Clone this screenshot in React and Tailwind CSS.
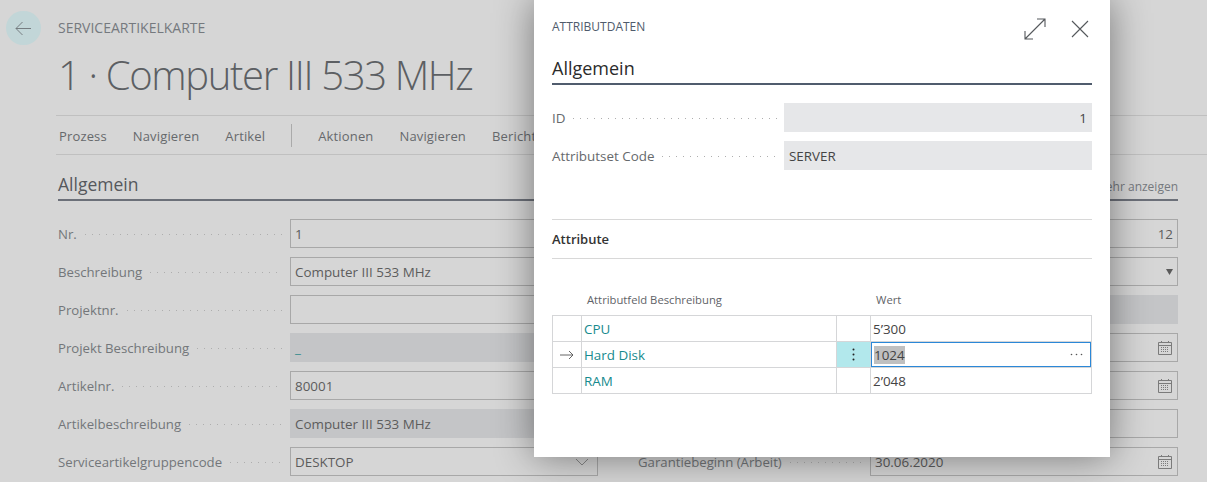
import React from 'react';

const leader = 'flex-1 h-px mx-2 mt-[2px] bg-[linear-gradient(to_right,#aeaeae_1px,transparent_1px)] bg-[length:7px_1px] bg-repeat-x';

const CalendarIcon = () => (
  <svg width="16" height="16" viewBox="0 0 16 16" fill="none" stroke="#7b7b7b" strokeWidth="1">
    <path d="M1.5 2.5h13v12h-13z" />
    <path d="M1.5 5.5h13" />
    <path d="M4.5 1v2M11.5 1v2" />
    <path d="M4 7.5h8M4 9.5h8M4 11.5h8" strokeDasharray="1 1" />
  </svg>
);

const leftFields = [
  { label: 'Nr.', value: '1' },
  { label: 'Beschreibung', value: 'Computer III 533 MHz' },
  { label: 'Projektnr.', value: '' },
  { label: 'Projekt Beschreibung', value: '_', readOnly: true, link: true },
  { label: 'Artikelnr.', value: '80001' },
  { label: 'Artikelbeschreibung', value: 'Computer III 533 MHz', readOnly: true },
  { label: 'Serviceartikelgruppencode', value: 'DESKTOP', chevron: true },
];

const rightFields = [
  { value: '12', right: true },
  { caret: true },
  { readOnly: true },
  { calendar: true },
  { calendar: true },
  {},
  { label: 'Garantiebeginn (Arbeit)', value: '30.06.2020', calendar: true },
];

const Field = ({ field }) => (
  <div className="flex items-center h-[29px]">
    <span className="pt-[2px] text-[13.2px] text-[#73767a] whitespace-nowrap">{field.label}</span>
    <div className={field.label ? leader : 'flex-1'} />
    <div
      className={`w-[308px] h-[29px] flex items-center shrink-0 text-[#5c5c5c] ${
        field.readOnly ? 'px-[5px] bg-[#c4c5c7]' : 'px-[4px] border border-[#a8a8a8]'
      }`}
    >
      <span className={`flex-1 pt-[2px] whitespace-nowrap ${field.right ? 'text-right' : ''} ${field.link ? 'text-[#2f8a8c]' : ''}`}>
        {field.value}
      </span>
      {field.chevron && (
        <svg width="14" height="8" viewBox="0 0 14 8" fill="none" stroke="#8a8a8a" className="mr-1">
          <path d="M1 1l6 6 6-6" />
        </svg>
      )}
      {field.caret && (
        <svg width="7" height="7" viewBox="0 0 7 7" fill="#5a5a5a">
          <path d="M0 1h7L3.5 7z" />
        </svg>
      )}
      {field.calendar && <CalendarIcon />}
    </div>
  </div>
);

const rows = [
  { name: 'CPU', value: '5’300' },
  { name: 'Hard Disk', value: '1024', active: true },
  { name: 'RAM', value: '2’048' },
];

const navLeft = ['Prozess', 'Navigieren', 'Artikel'];
const navRight = ['Aktionen', 'Navigieren', 'Berichte'];

const App = () => {
  return (
    <div className="relative w-[1207px] h-[482px] overflow-hidden bg-[#d6d6d6] font-['Open_Sans',sans-serif] text-[13.4px]">
      {/* Background card */}
      <div className="flex">
        <div className="w-[58px] shrink-0 pl-[6px] pt-[11px]">
          <div className="w-[35px] h-[34px] rounded-full bg-[#c2d6d8] flex items-center justify-center">
            <svg width="17" height="15" viewBox="0 0 17 15" fill="none" stroke="#6d7377" strokeWidth="0.9">
              <path d="M16 7.5H1M7.5 1L1 7.5 7.5 14" />
            </svg>
          </div>
        </div>
        <div className="flex-1 min-w-0">
          <div className="pt-[19px] h-[46px] text-[14px] font-medium text-[#75797e] leading-[18px]">SERVICEARTIKELKARTE</div>
          <h1 className="h-[69px] text-[40px] font-light tracking-[-1.35px] text-[#5c5f63] leading-[58px]">1 · Computer III 533 MHz</h1>
          <div className="h-[40px] ml-[-2px] pl-[3px] border-y border-[#c0c0c0] flex items-center gap-[26px] text-[13px] tracking-[0.15px] text-[#66696c]">
            {navLeft.map((item) => (
              <span key={item} className="pt-[3px]">{item}</span>
            ))}
            <span className="w-px h-[23px] bg-[#aaaaaa]" />
            {navRight.map((item) => (
              <span key={item} className="pt-[3px]">{item}</span>
            ))}
          </div>
          <div className="w-[1120px] h-[46px] border-b-2 border-[#6c7079] flex items-end justify-between pb-[3px]">
            <span className="text-[17.5px] font-medium text-[#55585c] leading-[24px]">Allgemein</span>
            <span className="text-[12px] text-[#75797e] leading-[18px]">Mehr anzeigen</span>
          </div>
          <div className="w-[1120px] mt-[18px] grid grid-cols-2 gap-x-[40px] gap-y-[9px]">
            {leftFields.map((field, i) => (
              <React.Fragment key={i}>
                <Field field={field} />
                <Field field={rightFields[i]} />
              </React.Fragment>
            ))}
          </div>
        </div>
      </div>

      {/* Dialog */}
      <div className="absolute left-[534px] top-0 w-[576px] h-[457px] bg-white px-[18px] shadow-[0_0_36px_rgba(0,0,0,0.45)]">
        <div className="flex items-start justify-between h-[56px]">
          <span className="mt-[18px] text-[12px] text-[#4f5b6c] leading-[18px]">ATTRIBUTDATEN</span>
          <div className="flex items-center mt-[18px] gap-[25px] pr-[3px]">
            <svg width="22" height="22" viewBox="0 0 22 22" fill="none" stroke="#55585c" strokeWidth="1.1">
              <path d="M1 21L21 1M13 1h8v8M1 13v8h8" />
            </svg>
            <svg width="18" height="18" viewBox="0 0 18 18" fill="none" stroke="#55585c" strokeWidth="1.1">
              <path d="M1 1l16 16M17 1L1 17" />
            </svg>
          </div>
        </div>
        <div className="h-[29px] border-b-2 border-[#505c6d] text-[18px] text-[#2b2b2b] leading-[24px]">Allgemein</div>
        <div className="mt-[18px] flex items-center h-[29px]">
          <span className="pt-[2px] text-[#66696c]">ID</span>
          <div className={leader} />
          <div className="w-[308px] h-[29px] shrink-0 ml-[-2px] pt-[2px] flex items-center justify-end px-[5px] bg-[#e6e7e9] text-[#444444]">1</div>
        </div>
        <div className="mt-[9px] flex items-center h-[29px]">
          <span className="pt-[2px] text-[#66696c]">Attributset Code</span>
          <div className={leader} />
          <div className="w-[308px] h-[29px] shrink-0 ml-[-2px] pt-[2px] flex items-center px-[5px] bg-[#e6e7e9] text-[#444444]">SERVER</div>
        </div>
        <div className="mt-[49px] h-[40px] pt-[2px] border-y border-[#d8d8d8] flex items-center font-semibold text-[13px] text-[#333333]">Attribute</div>
        <div className="mt-[32px] h-[24px] grid grid-cols-[29px_255px_34px_222px] text-[11.25px] text-[#5f6368] leading-[18px]">
          <span />
          <span className="pl-[6px]">Attributfeld Beschreibung</span>
          <span />
          <span className="pl-[6px]">Wert</span>
        </div>
        <div className="border-x border-t border-[#d5d6d8] w-[540px]">
          {rows.map((row) => (
            <div key={row.name} className="grid grid-cols-[28px_255px_34px_1fr] h-[26px] border-b border-[#d5d6d8]">
              <div className="flex items-center justify-center">
                {row.active && (
                  <svg width="14" height="10" viewBox="0 0 14 10" fill="none" stroke="#555555" strokeWidth="0.9">
                    <path d="M0 5h13M9 1l4 4-4 4" />
                  </svg>
                )}
              </div>
              <div className="border-l border-[#d5d6d8] flex items-center pl-[2px] pt-[2px] text-[#178a8e]">{row.name}</div>
              <div className={`border-l border-[#d5d6d8] flex items-center justify-center ${row.active ? 'bg-[#b2e8ec]' : ''}`}>
                {row.active && (
                  <svg width="3" height="13" viewBox="0 0 3 13" fill="#222222">
                    <circle cx="1.5" cy="1.5" r="1" />
                    <circle cx="1.5" cy="6.5" r="1" />
                    <circle cx="1.5" cy="11.5" r="1" />
                  </svg>
                )}
              </div>
              <div className="border-l border-[#d5d6d8] flex text-[#444444]">
                {row.active ? (
                  <div className="flex-1 flex items-center border border-[#2b88d8] pl-[2px] pr-[7px]">
                    <span className="flex-1 pt-[2px]">
                      <span className="bg-[#c0c0c0]">{row.value}</span>
                    </span>
                    <svg width="13" height="3" viewBox="0 0 13 3" fill="#555555">
                      <circle cx="1.5" cy="1.5" r="0.8" />
                      <circle cx="6.5" cy="1.5" r="0.8" />
                      <circle cx="11.5" cy="1.5" r="0.8" />
                    </svg>
                  </div>
                ) : (
                  <span className="flex items-center pl-[2px] pt-[2px]">{row.value}</span>
                )}
              </div>
            </div>
          ))}
        </div>
      </div>
    </div>
  );
};

export default App;
